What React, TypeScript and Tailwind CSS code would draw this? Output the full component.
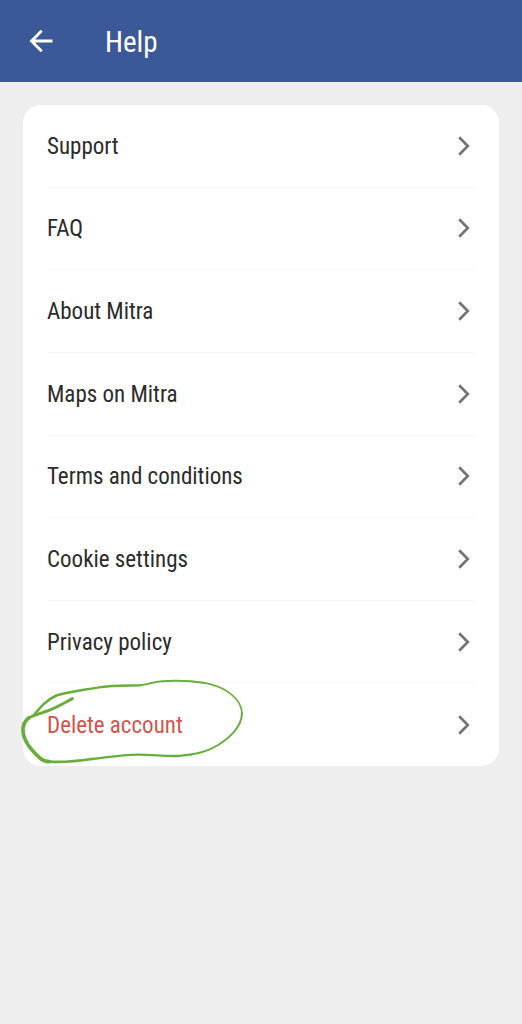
type HelpItem = { label: string; href: string; danger?: boolean };

const items: HelpItem[] = [
  { label: "Support", href: "#support" },
  { label: "FAQ", href: "#faq" },
  { label: "About Mitra", href: "#about" },
  { label: "Maps on Mitra", href: "#maps" },
  { label: "Terms and conditions", href: "#terms" },
  { label: "Cookie settings", href: "#cookies" },
  { label: "Privacy policy", href: "#privacy" },
  { label: "Delete account", href: "#delete-account", danger: true },
];

function BackArrow() {
  return (
    <svg width="24" height="24" viewBox="0 0 24 24" fill="none" stroke="currentColor" strokeWidth="2.8" aria-hidden="true">
      <path d="M23.500 12H2.500M12.700 1.800 2.500 12l10.200 10.200" />
    </svg>
  );
}

function Chevron() {
  return (
    <svg className="shrink-0 text-[#757575]" width="12" height="20" viewBox="0 0 12 20" fill="none" stroke="currentColor" strokeWidth="2.7" aria-hidden="true">
      <path d="M1.200 1.300 9.800 10 1.200 18.700" />
    </svg>
  );
}

// Hand-drawn loop; the pen presses harder on the left side.
function MarkerLoop() {
  return (
    <svg
      className="pointer-events-none absolute -left-[37px] -top-[13px] text-[#69ae3c]"
      width="250"
      height="110"
      viewBox="0 0 750 330"
      fill="none"
      stroke="currentColor"
      strokeLinecap="round"
      strokeLinejoin="round"
      aria-hidden="true"
    >
      <path strokeWidth="9" d="M187 86C155 103 132 117 103 126C84 132 68 137 56 144" />
      <path strokeWidth="11" d="M56 144C44 153 38 169 39 184C41 211 65 242 91 265C98 271 107 275 118 275" />
      <path strokeWidth="8" d="M118 275C160 277 205 273 246 267" />
      <path strokeWidth="7" d="M246 267C300 261 330 255 385 254C430 254 450 258 490 258C510 258 528 255 545 253" />
      <path strokeWidth="6" d="M545 253C592 246 635 224 668 190C684 173 696 153 696 130" />
      <path strokeWidth="5" d="M696 130C694 84 644 49 580 38" />
      <path strokeWidth="6" d="M580 38C535 31 465 29 428 38C412 43 405 45 390 46" />
      <path strokeWidth="7" d="M390 46C340 47 305 46 266 52C222 60 172 65 138 77" />
      <path strokeWidth="8" d="M138 77C110 89 91 112 70 137" />
    </svg>
  );
}

export default function App() {
  return (
    <div className="min-h-screen bg-[#eeeeee] font-['Roboto_Condensed','Roboto',sans-serif]">
      <header className="flex h-[82px] items-center gap-[52px] bg-[#3b5998] pl-[29px] text-white">
        <button type="button" aria-label="Back">
          <BackArrow />
        </button>
        <h1 className="pt-0.5 text-[29px] leading-9">Help</h1>
      </header>
      <main className="px-[23px] pt-[23px]">
        <ul className="grid min-h-[661px] auto-rows-fr rounded-[18px] bg-white px-6">
          {items.map((item) => (
            <li key={item.label} className="relative border-b border-[#f8f8f8] last:border-b-0">
              <a
                href={item.href}
                className={`flex h-full items-center justify-between pr-[5px] text-[23px] leading-7 ${item.danger ? "text-[#d3544c]" : "text-[#2b2b2b]"}`}
              >
                <span className="pt-0.5">{item.label}</span>
                <Chevron />
              </a>
              {item.danger && <MarkerLoop />}
            </li>
          ))}
        </ul>
      </main>
    </div>
  );
}
